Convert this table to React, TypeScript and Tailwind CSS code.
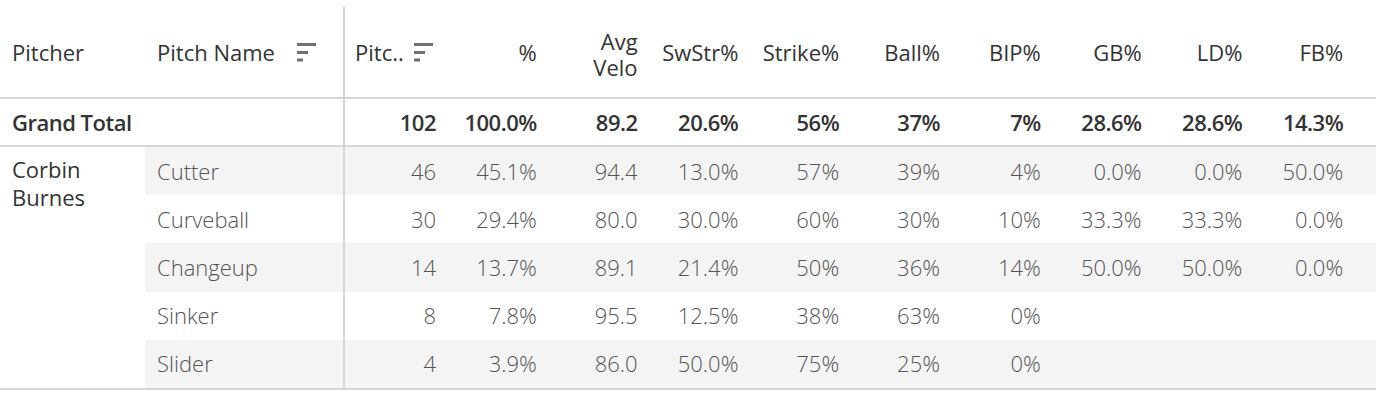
import React from "react";

const COLS = ["%", "Avg Velo", "SwStr%", "Strike%", "Ball%", "BIP%", "GB%", "LD%", "FB%"];

const TOTAL = ["102", "100.0%", "89.2", "20.6%", "56%", "37%", "7%", "28.6%", "28.6%", "14.3%"];

const ROWS = [
  { name: "Cutter", v: ["46", "45.1%", "94.4", "13.0%", "57%", "39%", "4%", "0.0%", "0.0%", "50.0%"] },
  { name: "Curveball", v: ["30", "29.4%", "80.0", "30.0%", "60%", "30%", "10%", "33.3%", "33.3%", "0.0%"] },
  { name: "Changeup", v: ["14", "13.7%", "89.1", "21.4%", "50%", "36%", "14%", "50.0%", "50.0%", "0.0%"] },
  { name: "Sinker", v: ["8", "7.8%", "95.5", "12.5%", "38%", "63%", "0%", "", "", ""] },
  { name: "Slider", v: ["4", "3.9%", "86.0", "50.0%", "75%", "25%", "0%", "", "", ""] },
];

function SortIcon() {
  return (
    <svg width="19" height="19" viewBox="0 0 19 19" className="shrink-0">
      <rect x="0" y="0" width="19" height="3" fill="#707070" />
      <rect x="0" y="8" width="11" height="3" fill="#707070" />
      <rect x="0" y="15.5" width="6" height="3" fill="#707070" />
    </svg>
  );
}

export default function App() {
  return (
    <div
      className="w-[1376px] h-[418px] bg-white pt-[7px] text-[22px] text-[#333]"
      style={{ fontFamily: '"Open Sans", "Noto Sans", sans-serif' }}
    >
      {/* Header */}
      <div className="grid grid-cols-[145px_198px_101px_repeat(9,100.8px)_1fr] h-[92px] border-b-2 border-[#d6d6d6]">
        <div className="flex items-center pl-3">Pitcher</div>
        <div className="flex items-center pl-3">
          <span>Pitch Name</span>
          <span className="ml-[22px]">
            <SortIcon />
          </span>
        </div>
        <div className="flex items-center border-l-2 border-[#d6d6d6] pl-[10px]">
          <span>Pitc..</span>
          <span className="ml-[10px]">
            <SortIcon />
          </span>
        </div>
        {COLS.map((c) => (
          <div key={c} className="flex items-center justify-end pr-2 text-right">
            {c === "Avg Velo" ? (
              <div className="mt-[3px] flex flex-col items-end">
                <span className="block h-[26px] leading-[26px]">Avg</span>
                <span className="block h-[26px] leading-[26px]">Velo</span>
              </div>
            ) : (
              c
            )}
          </div>
        ))}
        <div />
      </div>

      {/* Grand Total */}
      <div className="grid grid-cols-[145px_198px_101px_repeat(9,100.8px)_1fr] h-[48px] border-b-2 border-[#d6d6d6] font-semibold tracking-[-0.5px]">
        <div className="col-span-2 flex items-center pl-3">Grand Total</div>
        {TOTAL.map((t, i) => (
          <div
            key={i}
            className={`flex items-center justify-end pr-2 ${i === 0 ? "border-l-2 border-[#d6d6d6]" : ""}`}
          >
            {t}
          </div>
        ))}
        <div />
      </div>

      {/* Body */}
      <div className="flex border-b-2 border-[#d6d6d6]">
        <div className="w-[145px] shrink-0 pl-3 pt-[8px] leading-[28px]">
          Corbin
          <br />
          Burnes
        </div>
        <div className="flex-1">
          {ROWS.map((r, ri) => (
            <div
              key={r.name}
              className={`grid grid-cols-[198px_101px_repeat(9,100.8px)_1fr] h-[48.2px] font-light text-[#555] ${
                ri % 2 === 0 ? "bg-[#f4f4f4]" : "bg-white"
              }`}
            >
              <div className="flex items-center pl-3">{r.name}</div>
              {r.v.map((t, i) => (
                <div
                  key={i}
                  className={`flex items-center justify-end pr-2 ${i === 0 ? "border-l-2 border-[#d6d6d6]" : ""}`}
                >
                  {t}
                </div>
              ))}
              <div />
            </div>
          ))}
        </div>
      </div>
    </div>
  );
}
